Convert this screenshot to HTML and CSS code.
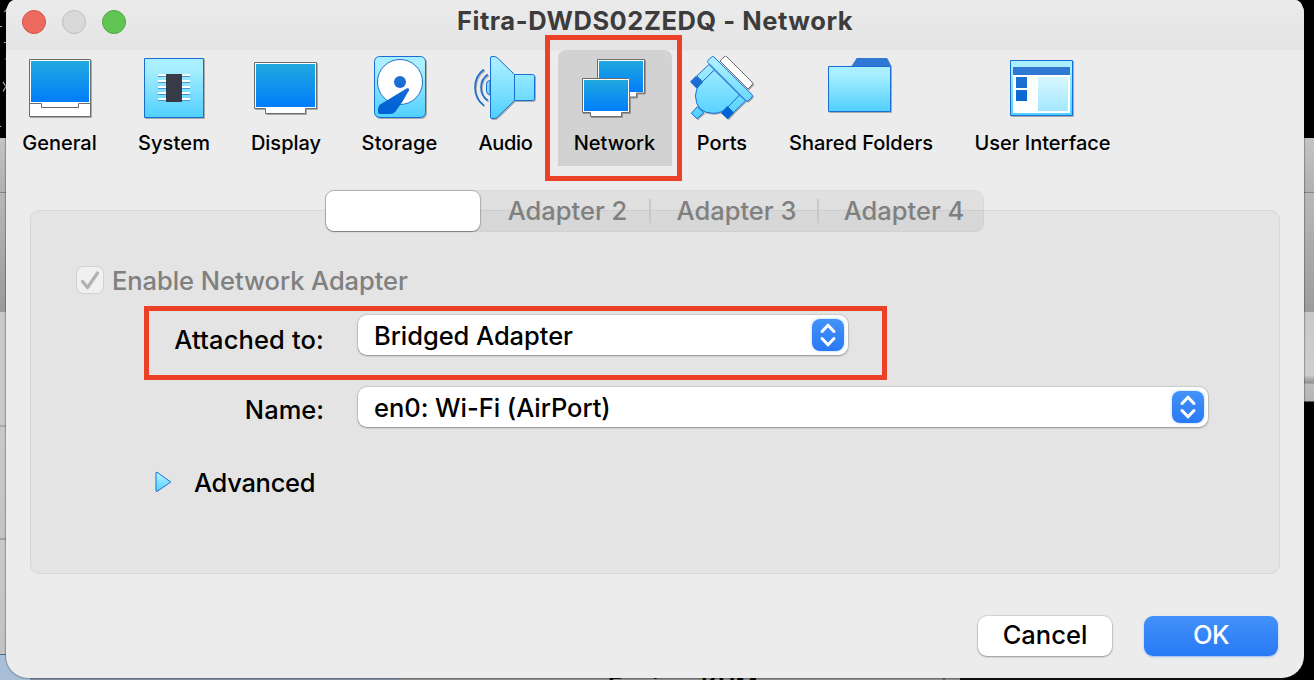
FILE: index.html
```html
<!DOCTYPE html>
<html lang="en">
<head>
<meta charset="utf-8">
<title>Fitra-DWDS02ZEDQ - Network</title>
<link rel="stylesheet" href="styles.css">
</head>
<body>
<div class="desktop">
  <div class="backdrop">
    <div class="strip left">
      <svg class="specks" viewBox="0 0 6 138" width="6" height="138"><path d="M4.500 12l1.500-2M0 26.500h2M4 42.500h2M5 59h1M3 82l3 4.500l-3 5M0 126.500h1.500" fill="none" stroke="#b5b5b5" stroke-width="1.200"/></svg>
    </div>
    <div class="strip right"></div>
    <div class="under"></div>
    <span class="behind-text">Engine: KVM</span>
  </div>

  <main class="window">
    <header class="titlebar">
      <div class="lights"><i class="light red"></i><i class="light idle"></i><i class="light green"></i></div>
      <h1 class="title">Fitra-DWDS02ZEDQ - Network</h1>
    </header>

    <svg class="defs" width="0" height="0">
      <defs>
        <linearGradient id="screen" x1="0" y1="0" x2="0" y2="1"><stop offset="0" stop-color="#21a9df"/><stop offset="1" stop-color="#007dfa"/></linearGradient>
        <linearGradient id="sky" x1="0" y1="0" x2="0" y2="1"><stop offset="0.150" stop-color="#aaefff"/><stop offset="1" stop-color="#50d0ff"/></linearGradient>
        <linearGradient id="skyPage" gradientUnits="userSpaceOnUse" x1="0" y1="62" x2="0" y2="118"><stop offset="0" stop-color="#aaefff"/><stop offset="1" stop-color="#50d0ff"/></linearGradient>
        <linearGradient id="deep" gradientUnits="userSpaceOnUse" x1="0" y1="62" x2="0" y2="108"><stop offset="0" stop-color="#3078d3"/><stop offset="1" stop-color="#0062d3"/></linearGradient>
        <linearGradient id="pane" x1="0" y1="0" x2="0" y2="1"><stop offset="0" stop-color="#d6f7ff"/><stop offset="1" stop-color="#a5e7ff"/></linearGradient>
      </defs>
    </svg>

    <nav class="toolbar">
      <div class="tool">
        <svg class="icon" viewBox="24 54 72 72"><path d="M29.500 59.500h61v57h-61z" fill="#fff" stroke="#6c6c6c"/><path d="M31 61h58v41H31z" fill="url(#screen)"/><path d="M29.500 103.500h12v4h37v-4h12" fill="none" stroke="#6c6c6c"/></svg>
        <span class="tool-label">General</span>
      </div>
      <div class="tool loose">
        <svg class="icon" viewBox="138 54 72 72"><path d="M144.500 58.500h59v59h-59z" fill="url(#sky)" stroke="#196ed5"/><path d="M158 77h32M158 83h32M158 89h32M158 95h32M158 101h32" transform="translate(0 -.5)" stroke="#4c94d0"/><path d="M158 75h32M158 81h32M158 87h32M158 93h32M158 99h32" stroke="#fff" stroke-width="2"/><path d="M166 74h16v28h-16z" fill="#373b47"/></svg>
        <span class="tool-label">System</span>
      </div>
      <div class="tool">
        <svg class="icon" viewBox="250 54 72 72"><path d="M254.500 62.500h62v46h-11v5h-40v-5h-11z" fill="#fff" stroke="#6c6c6c"/><path d="M256 64h59v43h-59z" fill="url(#screen)"/></svg>
        <span class="tool-label">Display</span>
      </div>
      <div class="tool loose">
        <svg class="icon" viewBox="364 54 72 72"><rect x="374.500" y="56.500" width="51" height="61" rx="5" fill="url(#sky)" stroke="#196ed5"/><circle cx="400" cy="82" r="22.500" fill="#fff" stroke="#246fcd"/><circle cx="400" cy="82" r="6" fill="url(#deep)"/><path d="M407 88.300Q409.600 87.600 409 90.300Q403 102 395.500 111.500Q393.500 114 390 114H380Q378 114 378 112V109Q378 106 380.500 104.200Z" fill="url(#deep)"/></svg>
        <span class="tool-label">Storage</span>
      </div>
      <div class="tool tight">
        <svg class="icon" viewBox="470 54 72 72"><g stroke="#196ed5" fill="url(#skyPage)"><path d="M490 80.500Q486.500 80.500 486.500 84V91Q486.500 94.500 490 94.500Z"/><path d="M514.500 74.500H532.500Q534.500 74.500 534.500 76.500V98.500Q534.500 100.500 532.500 100.500H514.500Z"/><path d="M490.500 58Q490.500 56.500 492 56.500H494Q496 56.500 497.500 58L514.500 74.500V100.500L497.500 117Q496 118.500 494 118.500H492Q490.500 118.500 490.500 117Z"/><g fill="none" stroke-width="1.600"><path d="M487.700 74.500Q481 79 481 87.500T487.700 100.500"/><path d="M483.800 69.500Q475 76 475 87.500T483.800 105.500"/></g></g></svg>
        <span class="tool-label">Audio</span>
      </div>
      <div class="tool selected">
        <svg class="icon" viewBox="579 54 72 72"><g fill="#fff" stroke="#6c6c6c"><path d="M597.500 59.500h47v33.500h-8v4h-39z"/><path d="M582.500 78.500h47v34h-8v4h-31v-4h-8z"/></g><path d="M599 61h44v31h-13V78h-31z" fill="url(#screen)"/><path d="M584 80h44v31h-44z" fill="url(#screen)"/></svg>
        <span class="tool-label">Network</span>
      </div>
      <div class="tool">
        <svg class="icon" viewBox="686 54 72 72"><path d="M720 61L724 57Q725.500 55.500 727 57L752 82Q753.500 83.500 752 85L748 89Z" fill="#fff" stroke="#6c6c6c"/><g fill="url(#skyPage)" stroke="#196ed5"><path d="M697.300 106.700L703.700 112.800L697 118.700L691.300 113.300Z"/><path d="M709 64.500L714.500 70L702.700 81.700L696.700 76Z"/><path d="M739.300 95L745.700 100.700L733.300 112.700L727.300 106.700Z"/><path d="M714.300 70L700 84Q695.500 89 695.500 96Q696 113 713 113.300Q722 113.300 728 107L739.500 95Z"/><path d="M708 62.500Q707 61.500 708 60.500L711.500 57Q712.700 55.800 714 57L752 94.700Q753 96 752 97L748.500 100.700Q747.300 101.700 746 100.700Z"/></g><g fill="url(#deep)"><path d="M696 75.700L703 82.300L696.700 88.600L690 81.700Z"/><path d="M727.300 106L734 112.700L727.700 119.300L721 113Z"/></g></svg>
        <span class="tool-label">Ports</span>
      </div>
      <div class="tool">
        <svg class="icon" viewBox="825 54 72 72"><path d="M851 67L856.700 58H887L891 66V68Z" fill="#2f78d3"/><path d="M828.500 66.500h62v45h-62z" fill="url(#sky)" stroke="#196ed5"/></svg>
        <span class="tool-label">Shared Folders</span>
      </div>
      <div class="tool">
        <svg class="icon" viewBox="1007 54 72 72"><path d="M1010.500 60.500h62v55h-62z" fill="url(#sky)" stroke="#196ed5"/><path d="M1013 67h57v46h-57z" fill="#fff"/><path d="M1013 67h57v8h-57z" fill="#3078d3"/><path d="M1016 77h11v11h-11zM1016 90h11v11h-11z" fill="url(#deep)"/><path d="M1038 77h30v34h-30z" fill="url(#pane)"/></svg>
        <span class="tool-label">User Interface</span>
      </div>
    </nav>

    <div class="tabs">
      <div class="tab active"></div>
      <div class="tab">Adapter 2</div>
      <div class="tab">Adapter 3</div>
      <div class="tab">Adapter 4</div>
    </div>

    <section class="panel">
      <div class="enable">
        <span class="check"><svg viewBox="0 0 26 26" width="26" height="26"><path d="M5.500 14.500l5 6l10-14.500" fill="none" stroke="#b2b2b2" stroke-width="3.300" stroke-linecap="round" stroke-linejoin="round"/></svg></span>
        <span class="enable-label">Enable Network Adapter</span>
      </div>
      <div class="field">
        <span class="field-label low">Attached to:</span>
        <div class="select short"><span>Bridged Adapter</span><i class="stepper"><svg viewBox="0 0 32 32" width="32" height="32"><path d="M10 12.500l6-6.300l6 6.300M10 19.500l6 6.300l6-6.300"/></svg></i></div>
      </div>
      <div class="field">
        <span class="field-label">Name:</span>
        <div class="select long"><span>en0: Wi-Fi (AirPort)</span><i class="stepper"><svg viewBox="0 0 32 32" width="32" height="32"><path d="M10 12.500l6-6.300l6 6.300M10 19.500l6 6.300l6-6.300"/></svg></i></div>
      </div>
      <div class="advanced">
        <svg viewBox="0 0 17 22" width="17" height="22"><path d="M1 1.500L2 1.200L15.800 11L2 20.500L1 20Z" fill="url(#sky)" stroke="#196ed5" stroke-linejoin="round"/></svg>
        <span class="advanced-label">Advanced</span>
      </div>
    </section>

    <footer class="actions">
      <div class="button">Cancel</div>
      <div class="button primary">OK</div>
    </footer>
  </main>

  <div class="callout callout-tool"></div>
  <div class="callout callout-field"></div>
</div>
</body>
</html>
```

FILE: styles.css
```css
* { box-sizing: border-box; }
body { margin: 0; font-family: Inter, "Liberation Sans", sans-serif; color: #000; }
.desktop { position: relative; width: 1314px; height: 680px; overflow: hidden; background: #000; }

/* Other windows showing round the edges of the dialog */
.backdrop { position: absolute; inset: 0; overflow: hidden; }
.strip { position: absolute; top: 0; bottom: 0; }
.left { left: 0; width: 30px; background: linear-gradient(#000 138px, #c4c4c4 138px, #b0b0b0 192px, #858585 192px, #858585 193px, #b8b8b8 193px, #9a9a9a 312px, #c9c9c9 312px, #c9c9c9 425px, #aaa 425px, #aaa 427px, #c9c9c9 427px, #c4c4c4 538px, #a5a5a5 538px, #a5a5a5 540px, #c9c9c9 540px, #c2c2c2 654px, #4f6b8c 654px, #4f6b8c 655px, #a9bfd8 655px); }
.right { right: 0; width: 30px; background: linear-gradient(#000 138px, #c4c4c4 138px, #b0b0b0 192px, #858585 192px, #858585 193px, #b8b8b8 193px, #9c9c9c 312px, #c8c8c8 312px, #cecece 375px, #909090 383px, #bdbdbd 384px, #b5b5b5 401px, #000 402px); }
.specks { display: block; }
.under { position: absolute; left: 30px; right: 30px; bottom: 0; height: 3px; background: linear-gradient(90deg, #8393a8 369px, #949494 369px, #949494 912px, #555 914px, #949494 916px, #949494 930px, #10110f 930px); }
.behind-text { position: absolute; left: 608px; top: 671px; font-size: 24px; line-height: 30px; font-weight: 600; white-space: nowrap; }

.window { position: relative; display: flex; flex-direction: column; width: 1298px; height: 678px; margin-left: 6px; border-radius: 9px 9px 22px 22px / 14px 14px 22px 22px; background: #ececec; box-shadow: 0 0 1px 1px rgba(0, 0, 0, .28); }
.titlebar { display: grid; grid-template-columns: 120px 1fr 120px; height: 50px; border-radius: 9px 9px 0 0 / 14px 14px 0 0; background: linear-gradient(#ebebeb, #e4e4e4); }
.lights { display: flex; gap: 16px; padding: 10px 0 0 16px; }
.light { width: 24px; height: 24px; border-radius: 50%; border: 1px solid; }
.red { background: #ed6a5e; border-color: #d65045; }
.idle { background: #d9d9d9; border-color: #bfbfbf; }
.green { background: #61c554; border-color: #4ea73f; }
.title { margin: 0; text-align: center; font-size: 25.5px; line-height: 42px; font-weight: 700; letter-spacing: .53px; color: #3c3c3c; white-space: nowrap; }
.defs { position: absolute; }

.toolbar { display: grid; grid-template-columns: 107px 122px 102px 125px 87px 131px 84px 194px 169px; height: 140px; }
.tool { display: flex; flex-direction: column; align-items: center; height: 116px; padding-top: 4px; }
.icon { width: 72px; height: 72px; margin-bottom: 4px; filter: drop-shadow(1px 1px 0 rgba(0, 0, 0, .28)); }
.tool-label { font-size: 20px; line-height: 26px; font-weight: 500; letter-spacing: 0; white-space: nowrap; }
.loose .tool-label { letter-spacing: .15px; }
.tight .tool-label { letter-spacing: -.3px; }
.selected { width: 114px; justify-self: center; border-radius: 8px 8px 0 0; background: #d2d2d2; }

.tabs { position: relative; z-index: 1; display: grid; grid-template-columns: 156px 170px 168px 165px; width: 659px; height: 42px; margin-left: 319px; border-radius: 9px; background: linear-gradient(rgba(0, 0, 0, .05), rgba(0, 0, 0, .06)); box-shadow: inset 0 0 0 1px rgba(0, 0, 0, .025); }
.tab { display: flex; justify-content: center; align-items: center; padding: 0 0 2px 3px; font-size: 25.5px; font-weight: 450; letter-spacing: 0; color: #808080; white-space: nowrap; background: linear-gradient(#c8c8c8, #c8c8c8) right center / 2px 24px no-repeat; }
.tab:last-child { padding-left: 5px; background: none; }
.tab.active { height: 40px; margin: 1px; border-radius: 8px; background: #fff; box-shadow: 0 0 1px 1px rgba(0, 0, 0, .2), 0 1px 1px rgba(0, 0, 0, .25); }

.panel { display: flex; flex-direction: column; width: 1250px; height: 364px; margin: -22px 0 0 24px; padding: 55px 0 0 46px; border: 1px solid #d9d9d9; border-radius: 9px; background: #e4e4e4; font-size: 25.5px; font-weight: 450; }
.enable { display: flex; align-items: center; height: 28px; margin-bottom: 21px; color: #808080; }
.check { width: 26px; height: 26px; margin-right: 9px; border-radius: 6px; background: #f0f0f0; box-shadow: 0 0 0 1px rgba(0, 0, 0, .08); }
.check svg { display: block; }
.enable-label { letter-spacing: -.06px; }
.field { display: grid; grid-template-columns: 247px auto; justify-content: start; align-items: center; column-gap: 34px; height: 40px; margin-bottom: 32px; }
.field-label { padding-top: 5px; text-align: right; letter-spacing: 0; }
.field-label.low { padding-top: 9px; letter-spacing: .15px; }
.select { display: flex; align-items: center; justify-content: space-between; height: 40px; padding: 0 4px 0 16px; border-radius: 9px; background: #fff; letter-spacing: -.05px; box-shadow: 0 0 1px 1px rgba(0, 0, 0, .1), 0 1px 2px rgba(0, 0, 0, .3); }
.select span { padding-top: 1px; }
.short { width: 490px; }
.long { width: 850px; }
.stepper { width: 32px; height: 32px; border-radius: 8px; background: linear-gradient(#4391f8, #2879f6); box-shadow: 0 0 3px rgba(40, 121, 246, .4); }
.stepper svg { display: block; fill: none; stroke: #fff; stroke-width: 3; stroke-linecap: round; stroke-linejoin: round; }
.advanced { display: flex; align-items: center; gap: 22px; height: 32px; margin-top: 7px; padding-left: 78px; }
.advanced-label { letter-spacing: -.3px; }

.actions { display: flex; justify-content: flex-end; gap: 32px; margin-top: 42px; padding-right: 26px; }
.button { width: 134px; height: 40px; border-radius: 9px; text-align: center; font-size: 25.5px; font-weight: 450; line-height: 37px; letter-spacing: 0; background: #fff; box-shadow: 0 0 1px 1px rgba(0, 0, 0, .1), 0 1px 2px rgba(0, 0, 0, .3); }
.primary { color: #fff; letter-spacing: -.6px; background: linear-gradient(#4391f8, #2879f6); box-shadow: 0 1px 2px rgba(40, 121, 246, .45); }

/* Red highlight frames */
.callout { position: absolute; border: 5px solid #ec4126; }
.callout-tool { left: 545px; top: 35px; width: 137px; height: 146px; }
.callout-field { left: 144px; top: 306px; width: 743px; height: 74px; }
```
